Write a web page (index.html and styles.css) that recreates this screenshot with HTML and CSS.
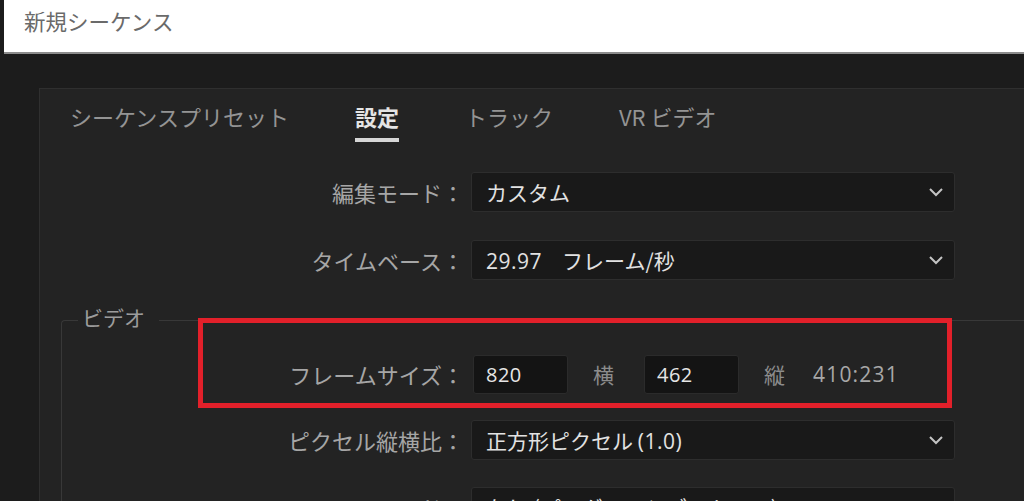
FILE: index.html
```html
<!DOCTYPE html>
<html lang="ja">
<head>
    <meta charset="UTF-8">
    <meta name="viewport" content="width=device-width, initial-scale=1.0">
    <title>新規シーケンス</title>
    <link rel="stylesheet" href="styles.css">
</head>
<body>
    <!--ダイアログのタイトル-->
    <header class="titlebar">新規シーケンス</header>

    <div class="dialog">
        <div class="panel">
            <!--タブ-->
            <nav class="tabs">
                <span class="tab">シーケンスプリセット</span>
                <span class="tab active">設定</span>
                <span class="tab">トラック</span>
                <span class="tab">VR ビデオ</span>
            </nav>

            <div class="settings">
                <div class="row">
                    <span class="row-label">編集モード：</span>
                    <div class="select">
                        <span>カスタム</span>
                        <svg class="chevron" width="16" height="10" viewBox="0 0 16 10"><polyline points="2,2 8,8 14,2" /></svg>
                    </div>
                </div>
                <div class="row">
                    <span class="row-label">タイムベース：</span>
                    <div class="select">
                        <span><span class="digits">29.97</span><span class="spacer"></span>フレーム/秒</span>
                        <svg class="chevron" width="16" height="10" viewBox="0 0 16 10"><polyline points="2,2 8,8 14,2" /></svg>
                    </div>
                </div>

                <!--ビデオ設定-->
                <fieldset class="group">
                    <legend>ビデオ</legend>
                    <div class="row frame-row">
                        <span class="row-label">フレームサイズ：</span>
                        <div class="num digits">820</div>
                        <span class="unit">横</span>
                        <div class="num digits">462</div>
                        <span class="unit">縦</span>
                        <span class="ratio digits">410:231</span>
                        <div class="highlight"></div><!--赤枠の注釈-->
                    </div>
                    <div class="row">
                        <span class="row-label">ピクセル縦横比：</span>
                        <div class="select">
                            <span>正方形ピクセル <span class="digits">(1.0)</span></span>
                            <svg class="chevron" width="16" height="10" viewBox="0 0 16 10"><polyline points="2,2 8,8 14,2" /></svg>
                        </div>
                    </div>
                    <div class="row">
                        <span class="row-label">フィールド：</span>
                        <div class="select">
                            <span>なし (プログレッシブスキャン)</span>
                            <svg class="chevron" width="16" height="10" viewBox="0 0 16 10"><polyline points="2,2 8,8 14,2" /></svg>
                        </div>
                    </div>
                </fieldset>
            </div>
        </div>
    </div>
</body>
</html>
```

FILE: styles.css
```css
/*基本*/
body {
    margin: 0;
    height: 501px;
    overflow: hidden;
    background-color: #1c1c1c;
    font-family: "Noto Sans CJK JP", "Noto Sans", sans-serif;
    color: #a6a6a6;
}

.titlebar {
    height: 52px;
    margin-left: 4px;
    padding-left: 20px;
    background-color: #fff;
    border-bottom: 2px solid #8c8c8c;
    color: #6a6a6a;
    font-size: 21.5px;
    line-height: 42px;
}

.dialog {
    padding: 34px 0 0 39px;
}

.panel {
    height: 440px;
    background-color: #232323;
    border-top: 1px solid #2f2f2f;
    border-left: 1px solid #2f2f2f;
}

/*タブ*/
.tabs {
    display: flex;
    gap: 66px;
    margin-top: 12px;
    padding-left: 30px;
}

.tab {
    font-size: 22px;
    line-height: 30px;
    padding-bottom: 7px;
    border-bottom: 4px solid transparent;
    color: #949494;
}

.tab.active {
    color: #e4e4e4;
    font-weight: bold;
    border-bottom-color: #d6d6d6;
}

/*フォーム*/
.settings {
    margin-top: 30px;
}

.row {
    display: flex;
    align-items: center;
    height: 40px;
}

.row + .row {
    margin-top: 28px;
}

.row-label {
    width: 424px;
    margin-right: 7px;
    text-align: right;
    font-size: 22px;
    white-space: nowrap;
}

.select {
    box-sizing: border-box;
    width: 484px;
    height: 40px;
    display: flex;
    align-items: center;
    justify-content: space-between;
    padding: 0 10px 0 14px;
    background-color: #191919;
    border: 1px solid #2d2d2d;
    border-radius: 3px;
    color: #e2e2e2;
    font-size: 21px;
    white-space: nowrap;
}

.digits {
    font-family: "Open Sans", "Noto Sans", sans-serif;
    letter-spacing: 0.5px;
}

.spacer {
    display: inline-block;
    width: 20px;
}

.chevron polyline {
    fill: none;
    stroke: #c4c4c4;
    stroke-width: 2;
}

.group {
    margin: 23px 0 0 21px;
    padding: 0;
    border: 1px solid #383838;
    border-right: none;
    border-bottom: none;
    border-radius: 4px 0 0 0;
    min-width: 0;
}

.group legend {
    margin-left: 16px;
    padding: 0 14px 6px 4px;
    font-size: 21px;
    line-height: 28px;
    color: #9c9c9c;
}

.group .row-label {
    width: 402px;
}

.frame-row {
    position: relative;
    margin-top: 17px;
}

.group .row + .row {
    margin-top: 26px;
}

.group .row + .row + .row {
    margin-top: 27px;
}

.num {
    box-sizing: border-box;
    width: 95px;
    height: 39px;
    margin-left: 2px;
    padding-left: 12px;
    background-color: #141414;
    border: 1px solid #2b2b2b;
    border-radius: 3px;
    color: #e6e6e6;
    font-size: 20px;
    line-height: 37px;
}

.unit {
    margin: 0 28px 0 25px;
    font-size: 21px;
    color: #8c8c8c;
}

.ratio {
    font-size: 21px;
    letter-spacing: 1.2px;
    color: #a8a8a8;
}

/*赤枠*/
.highlight {
    position: absolute;
    left: 136px;
    top: -36px;
    width: 754px;
    height: 90px;
    box-sizing: border-box;
    border: 5px solid #e2202a;
}
```
